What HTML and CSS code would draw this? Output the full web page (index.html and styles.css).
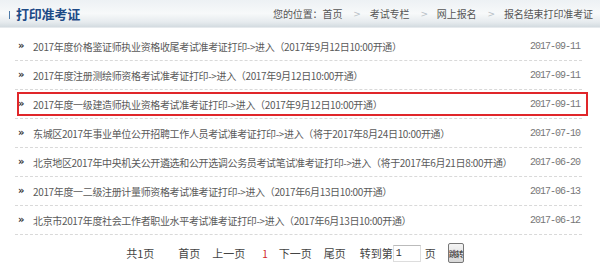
FILE: index.html
```html
<!DOCTYPE html>
<html lang="zh-CN">
<head>
<meta charset="utf-8">
<title>打印准考证</title>
<link rel="stylesheet" href="styles.css">
</head>
<body>
<div class="page">
  <div class="topbar">
    <h2 class="title"><span class="mark"></span>打印准考证</h2>
    <div class="crumbs">您的位置：<a href="#">首页</a><span class="sep">&gt;</span><a href="#">考试专栏</a><span class="sep">&gt;</span><a href="#">网上报名</a><span class="sep">&gt;</span><a href="#">报名结束打印准考证</a></div>
  </div>
  <ul class="list">
    <li class="row"><span class="arrow">»</span><a class="name" href="#">2017年度价格鉴证师执业资格收尾考试准考证打印-&gt;进入（2017年9月12日10:00开通）</a><span class="date">2017-09-11</span></li>
    <li class="row"><span class="arrow">»</span><a class="name" href="#">2017年度注册测绘师资格考试准考证打印-&gt;进入（2017年9月12日10:00开通）</a><span class="date">2017-09-11</span></li>
    <li class="row highlight"><span class="arrow">»</span><a class="name" href="#">2017年度一级建造师执业资格考试准考证打印-&gt;进入（2017年9月12日10:00开通）</a><span class="date">2017-09-11</span></li>
    <li class="row"><span class="arrow">»</span><a class="name" href="#">东城区2017年事业单位公开招聘工作人员考试准考证打印-&gt;进入（将于2017年8月24日10:00开通）</a><span class="date">2017-07-10</span></li>
    <li class="row"><span class="arrow">»</span><a class="name" href="#">北京地区2017年中央机关公开遴选和公开选调公务员考试笔试准考证打印-&gt;进入（将于2017年6月21日8:00开通）</a><span class="date">2017-06-20</span></li>
    <li class="row"><span class="arrow">»</span><a class="name" href="#">2017年度一二级注册计量师资格考试准考证打印-&gt;进入（2017年6月13日10:00开通）</a><span class="date">2017-06-13</span></li>
    <li class="row"><span class="arrow">»</span><a class="name" href="#">北京市2017年度社会工作者职业水平考试准考证打印-&gt;进入（2017年6月13日10:00开通）</a><span class="date">2017-06-12</span></li>
  </ul>
  <div class="pager">
    <span class="total">共1页</span>
    <a href="#">首页</a>
    <a href="#">上一页</a>
    <span class="current">1</span>
    <a href="#">下一页</a>
    <a href="#">尾页</a>
    <span class="goto">转到第<input class="pageinput" type="text" value="1">页</span>
    <button class="jump" type="button">跳转</button>
  </div>
</div>
</body>
</html>
```

FILE: styles.css
```css
* { box-sizing: border-box; }
html, body { margin: 0; padding: 0; background: #fff; }
body {
  font-family: "Noto Sans CJK SC", "Liberation Sans", sans-serif;
  color: #555;
  width: 600px;
}
a { color: inherit; text-decoration: none; }

.topbar {
  height: 28px;
  display: flex;
  align-items: center;
  justify-content: space-between;
  padding: 0 7px 0 9px;
  background: linear-gradient(#edf1f4 0%, #f7f9fa 50%, #e6ebee 82%, #d3dbe0 100%);
  border-bottom: 1px solid #e6eaed;
}
.title {
  margin: 0;
  display: flex;
  align-items: center;
  font-size: 13px;
  font-weight: bold;
  color: #1d4a86;
  letter-spacing: -0.2px;
}
.mark {
  width: 1px;
  height: 8px;
  background: #4d7aa8;
  margin: 2px 6px 0 0;
}
.crumbs {
  font-size: 10px;
  letter-spacing: -0.1px;
  color: #555;
  display: flex;
  align-items: center;
}
.sep {
  color: #b8c0c6;
  margin: 0 9px 0 11px;
  font-family: "DejaVu Sans", sans-serif;
  font-size: 9px;
}

.list {
  list-style: none;
  margin: 4px 18px 0 15px;
  padding: 0;
}
.row {
  position: relative;
  height: 29px;
  display: flex;
  align-items: center;
  border-bottom: 1px dashed #d9d9d9;
  padding: 0 2px 0 3px;
}
.arrow {
  width: 15px;
  font-family: "DejaVu Sans", sans-serif;
  font-size: 10px;
  font-weight: bold;
  color: #333;
  flex: none;
  margin-top: -2px;
}
.name {
  flex: 1;
  font-size: 10px;
  letter-spacing: -0.35px;
  color: #5a5a5a;
  white-space: nowrap;
  overflow: hidden;
}
.date {
  flex: none;
  font-family: "Liberation Mono", monospace;
  font-size: 10px;
  letter-spacing: -1px;
  color: #777;
}
.highlight::after {
  content: "";
  position: absolute;
  left: 2px;
  right: -6px;
  top: 2px;
  bottom: 2px;
  border: 2px solid #e0262a;
  pointer-events: none;
}

.pager {
  display: flex;
  justify-content: center;
  align-items: center;
  height: 36px;
  font-size: 11px;
  color: #444;
  gap: 12px;
  padding-right: 10px;
}
.total { margin-right: 12px; }
.current { color: #d0242a; font-size: 10px; margin: 0 -1px 0 5px; }
.goto { display: flex; align-items: center; margin-left: 2px; }
.pageinput {
  width: 28px;
  height: 17px;
  border: 1px solid #ddd;
  border-top-color: #bbb;
  font-size: 10px;
  padding: 0 2px;
  margin: 0 4px 0 0;
  font-family: "Liberation Mono", monospace;
  color: #333;
}
.jump {
  height: 20px;
  width: 16px;
  padding: 0;
  font-size: 8px;
  letter-spacing: -1px;
  font-family: "Noto Sans CJK SC", sans-serif;
  border: 1px solid #777;
  border-radius: 2px;
  background: linear-gradient(#f4f4f4, #d8d8d8);
  color: #222;
  overflow: hidden;
}
```
